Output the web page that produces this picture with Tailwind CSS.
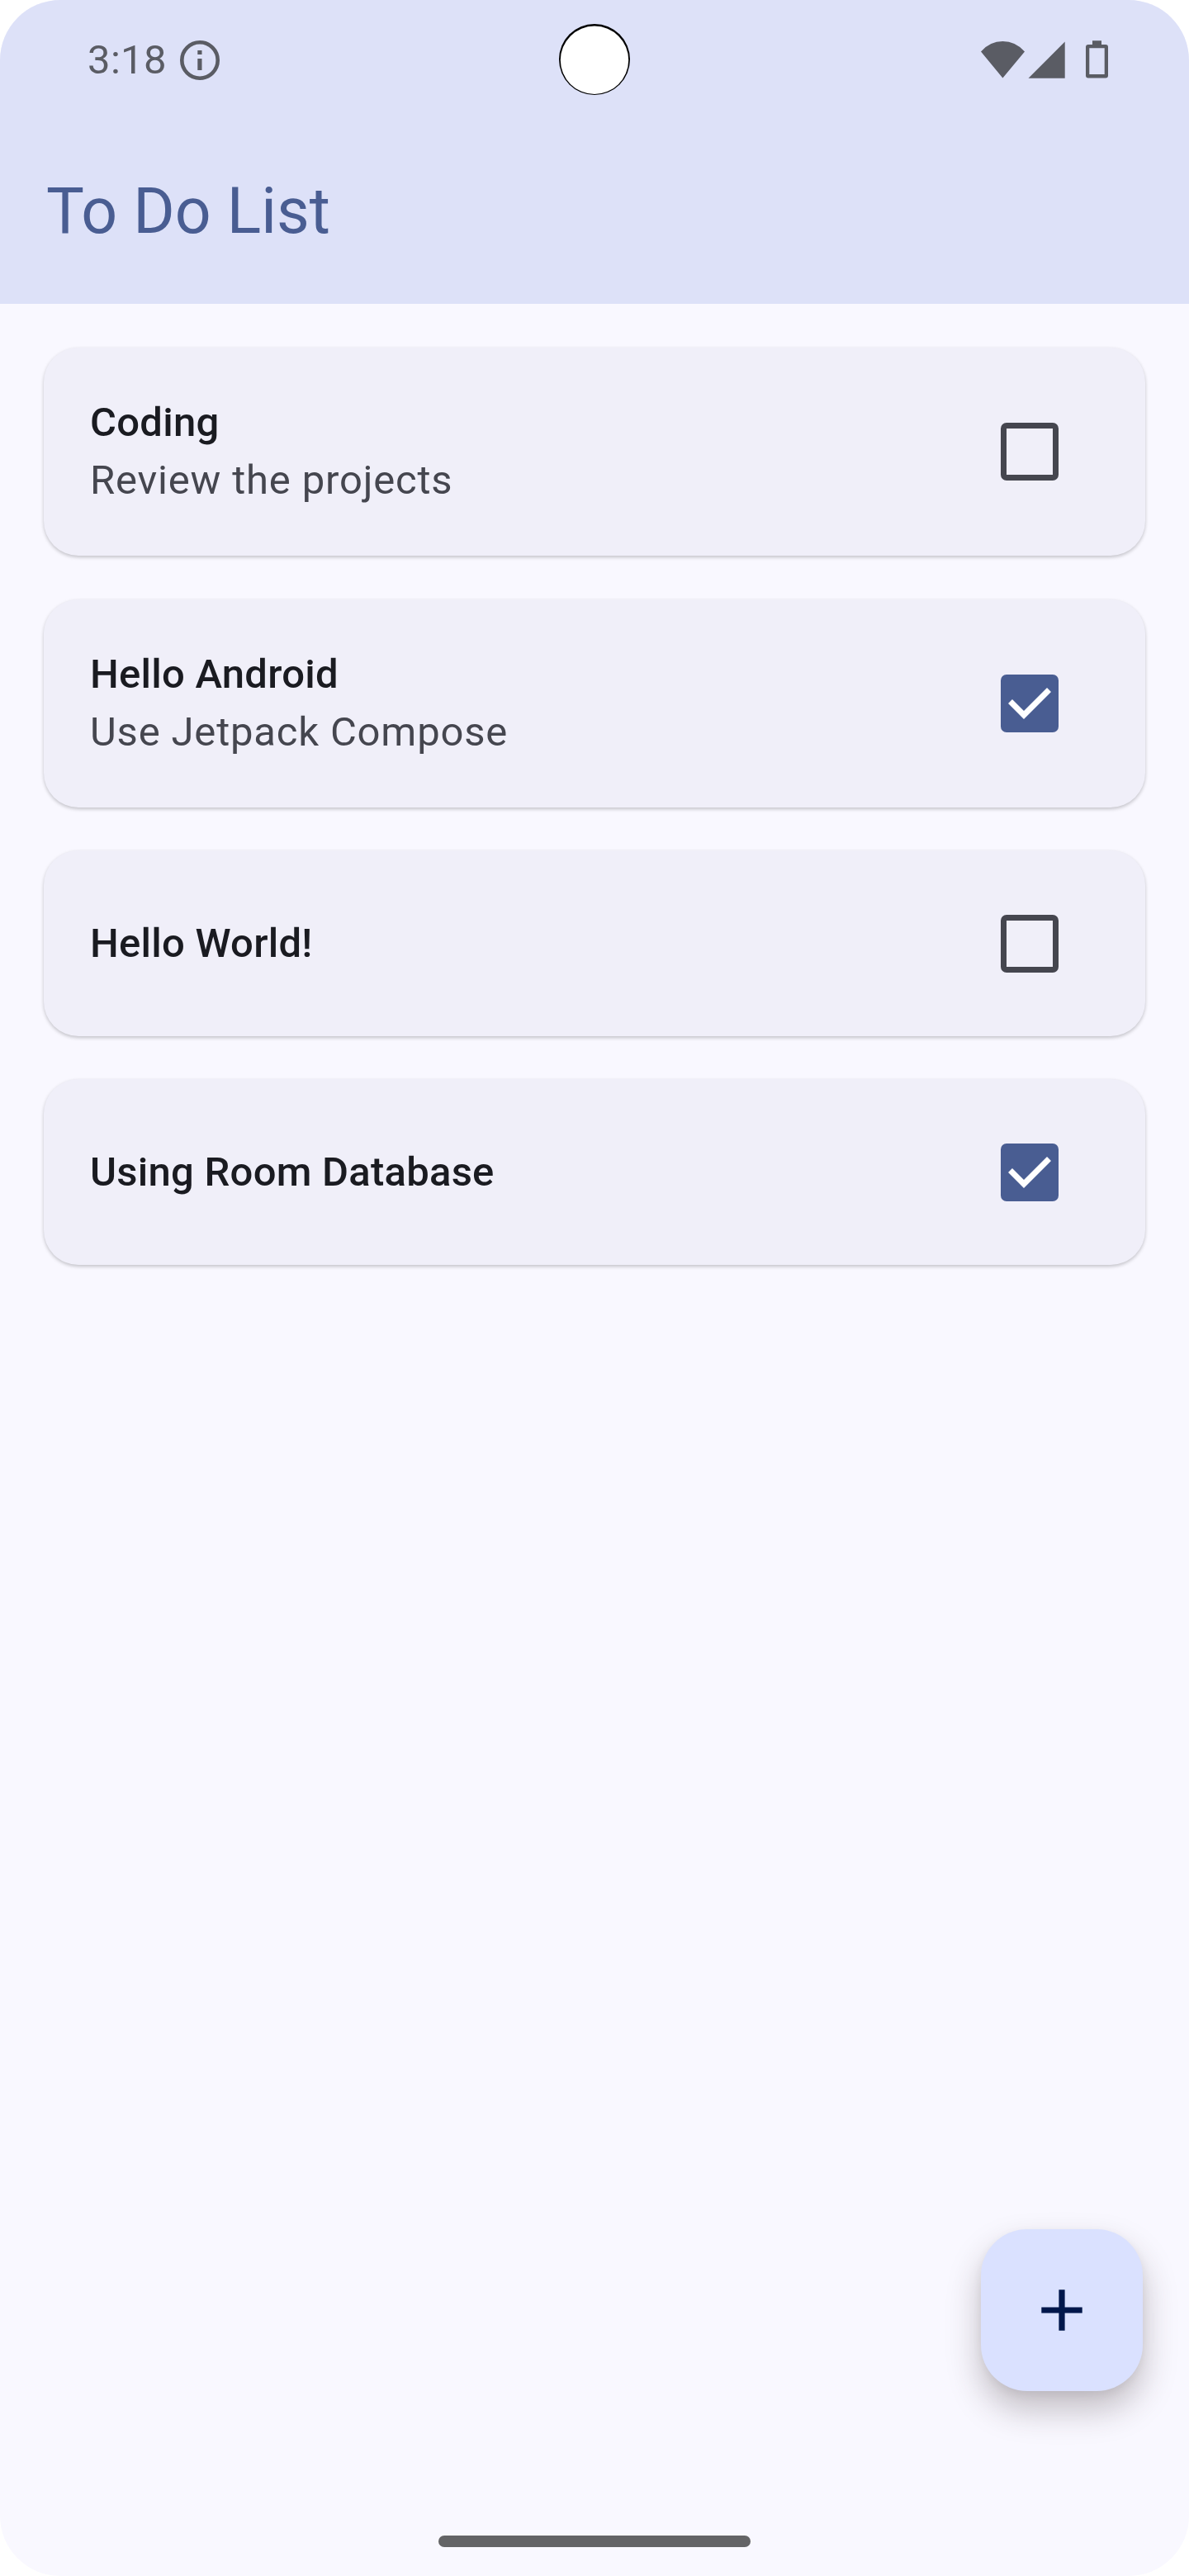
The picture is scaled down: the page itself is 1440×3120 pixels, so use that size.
<!DOCTYPE html>
<html lang="en">
<head>
<meta charset="utf-8">
<title>To Do List</title>
<script src="https://cdn.jsdelivr.net/npm/@tailwindcss/browser@4"></script>
</head>
<body class="bg-white font-['Roboto',sans-serif]">
<div class="relative flex h-[3120px] w-[1440px] flex-col overflow-hidden rounded-[73px] bg-[#f9f8ff]">
  <header class="h-[368px] bg-[#dde1f8]">
    <div class="relative flex h-[146px] items-center justify-between pl-[106px] pr-[98px] text-[#5a5c64]">
      <div class="flex items-center gap-[15px]">
        <span class="text-[49px] leading-[56px] tracking-[0.35px]">3:18</span>
        <svg class="size-[50px]" viewBox="0 0 50 50" fill="currentColor"><circle cx="25" cy="25" r="21.7" fill="none" stroke="currentColor" stroke-width="4.6"/><path d="M22.3 13h5.2v5h-5.2zM22.3 23h5.2v14h-5.2z"/></svg>
      </div>
      <svg class="absolute left-[677px] top-[29px] size-[86px]" viewBox="0 0 86 86"><circle cx="43" cy="43" r="43"/><circle cx="43" cy="43.8" r="41.2" fill="#fff"/></svg>
      <svg class="h-[50px] w-[156px]" viewBox="0 0 156 50" fill="currentColor"><path d="M2 14.400Q13 2 28.400 2T55 14.400L28.400 46.400zM59.500 46.700L103.700 2.500V46.700zM137 1.200h11V6h5a3 3 0 0 1 3 3v34.500a3 3 0 0 1-3 3h-21a3 3 0 0 1-3-3V9a3 3 0 0 1 3-3h5zM133.300 10.300v31.700h18.400V10.300z" fill-rule="evenodd"/></svg>
    </div>
    <h1 class="pt-[61px] pl-[56px] text-[77px] leading-[98px] text-[#495d92]">To Do List</h1>
  </header>
  <main class="flex flex-col gap-[52px] px-[53px] pt-[53px]">
    <section class="mb-px flex h-[252px] items-center justify-between rounded-[42px] bg-[#f0eff9] pl-[56px] pr-[105px] shadow-[0_2px_4px_rgba(0,0,0,0.22)]">
      <div>
        <h2 class="text-[49px] font-medium leading-[70px] tracking-[0.25px] text-[#1a1b21]">Coding</h2>
        <p class="text-[49px] leading-[70px] tracking-[0.82px] text-[#45464f]">Review the projects</p>
      </div>
      <div class="size-[70px] rounded-[7px] border-[7px] border-[#45464f]"></div>
    </section>
    <section class="flex h-[252px] items-center justify-between rounded-[42px] bg-[#f0eff9] pl-[56px] pr-[105px] shadow-[0_2px_4px_rgba(0,0,0,0.22)]">
      <div>
        <h2 class="text-[49px] font-medium leading-[70px] tracking-[0.25px] text-[#1a1b21]">Hello Android</h2>
        <p class="text-[49px] leading-[70px] tracking-[0.82px] text-[#45464f]">Use Jetpack Compose</p>
      </div>
      <svg class="size-[70px]" viewBox="0 0 70 70"><rect width="70" height="70" rx="7" fill="#495d92"/><path d="M11.500 32.500L28 49L58.500 18.500" fill="none" stroke="#fff" stroke-width="7"/></svg>
    </section>
    <section class="flex h-[225px] items-center justify-between rounded-[42px] bg-[#f0eff9] pt-px pl-[56px] pr-[105px] shadow-[0_2px_4px_rgba(0,0,0,0.22)]">
      <h2 class="text-[49px] font-medium leading-[70px] tracking-[0.25px] text-[#1a1b21]">Hello World!</h2>
      <div class="size-[70px] rounded-[7px] border-[7px] border-[#45464f]"></div>
    </section>
    <section class="flex h-[225px] items-center justify-between rounded-[42px] bg-[#f0eff9] pt-px pl-[56px] pr-[105px] shadow-[0_2px_4px_rgba(0,0,0,0.22)]">
      <h2 class="text-[49px] font-medium leading-[70px] tracking-[0.25px] text-[#1a1b21]">Using Room Database</h2>
      <svg class="size-[70px]" viewBox="0 0 70 70"><rect width="70" height="70" rx="7" fill="#495d92"/><path d="M11.500 32.500L28 49L58.500 18.500" fill="none" stroke="#fff" stroke-width="7"/></svg>
    </section>
  </main>
  <button aria-label="Add" class="absolute left-[1188px] top-[2700px] flex size-[196px] items-center justify-center rounded-[56px] bg-[#dae1ff] shadow-[0_22px_40px_rgba(50,35,40,0.28),0_4px_12px_rgba(0,0,0,0.06)]">
    <svg class="size-[50px]" viewBox="0 0 50 50"><path d="M0.300 25H49.700M25 0.300V49.700" stroke="#00174b" stroke-width="7.200"/></svg>
  </button>
  <div class="absolute bottom-[35px] left-[531px] h-[14px] w-[378px] rounded-full bg-[#646466]"></div>
</div>
</body>
</html>
